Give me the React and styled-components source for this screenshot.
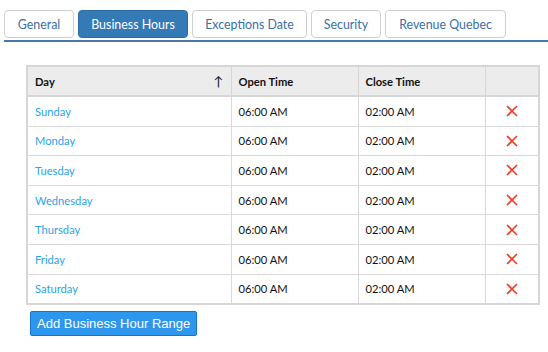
import React from 'react';
import styled, { createGlobalStyle } from 'styled-components';

const GlobalStyle = createGlobalStyle`
    body {
        margin: 0;
        background: #ffffff;
        font-family: Lato, "Noto Sans", sans-serif;
    }
`

const Page = styled.div`
    width: 548px;
    height: 352px;
    padding: 10px 0 0 4px;
    box-sizing: border-box;
`
const TabBar = styled.div`
    display: flex;
    gap: 4px;
    border-bottom: 2px solid #4a77a3;
    padding-bottom: 2px;
`
const Tab = styled.div`
    width: ${p => p.w}px;
    height: 28px;
    box-sizing: border-box;
    display: flex;
    align-items: center;
    justify-content: center;
    border: 1px solid ${p => (p.active ? '#2e6da4' : '#cfcfcf')};
    border-radius: 4px;
    background: ${p => (p.active ? '#337ab7' : '#ffffff')};
    color: ${p => (p.active ? '#ffffff' : '#3b6ea5')};
    font-size: 12.4px;
    white-space: nowrap;
`
const Content = styled.div`
    padding: 23px 10px 0 22px;
`
const Table = styled.table`
    border-collapse: collapse;
    table-layout: fixed;
    width: 512px;
    border: 2px solid #d6d6d6;
    font-size: 11.2px;
`
const HeadCell = styled.th`
    height: 28px;
    background: #ececec;
    border: 1px solid #d6d6d6;
    border-bottom: 2px solid #d6d6d6;
    text-align: left;
    padding: 0 7px;
    font-weight: 700;
    color: #111;
    position: relative;
`
const SortArrow = styled.span`
    position: absolute;
    right: 7px;
    top: 6px;
    font-size: 13px;
    font-weight: 400;
`
const Cell = styled.td`
    height: 28.6px;
    border: 1px solid #d9d9d9;
    padding: 0 7px;
    color: ${p => (p.link ? '#2aa3e8' : '#111')};
    text-align: ${p => (p.center ? 'center' : 'left')};
`
const RemoveIcon = styled.svg`
    display: block;
    margin: 0 auto;
`
const AddButton = styled.button`
    margin: 6px 0 0 4px;
    height: 25px;
    padding: 0 6px;
    background: #2f96ee;
    border: 1px solid #1b73c9;
    border-radius: 2px;
    color: #ffffff;
    font-family: "Liberation Sans", Arial, sans-serif;
    font-size: 13px;
`

const tabs = [
    { label: 'General', w: 70 },
    { label: 'Business Hours', w: 110, active: true },
    { label: 'Exceptions Date', w: 115 },
    { label: 'Security', w: 70 },
    { label: 'Revenue Quebec', w: 121 },
]

const days = ['Sunday', 'Monday', 'Tuesday', 'Wednesday', 'Thursday', 'Friday', 'Saturday']

function App() {
    return (
        <Page>
            <GlobalStyle />
            <TabBar>
                {tabs.map(t => (
                    <Tab key={t.label} active={t.active} w={t.w}>{t.label}</Tab>
                ))}
            </TabBar>
            <Content>
                <Table>
                    <colgroup>
                        <col style={{ width: 204 }} />
                        <col style={{ width: 127 }} />
                        <col style={{ width: 127 }} />
                        <col style={{ width: 54 }} />
                    </colgroup>
                    <thead>
                        <tr>
                            <HeadCell>Day<SortArrow>↑</SortArrow></HeadCell>
                            <HeadCell>Open Time</HeadCell>
                            <HeadCell>Close Time</HeadCell>
                            <HeadCell></HeadCell>
                        </tr>
                    </thead>
                    <tbody>
                        {days.map(d => (
                            <tr key={d}>
                                <Cell link>{d}</Cell>
                                <Cell>06:00 AM</Cell>
                                <Cell>02:00 AM</Cell>
                                <Cell center>
                                    <RemoveIcon width="12" height="12" viewBox="0 0 12 12">
                                        <path d="M1 1L11 11M11 1L1 11" stroke="#ee3b24" strokeWidth="1.6" />
                                    </RemoveIcon>
                                </Cell>
                            </tr>
                        ))}
                    </tbody>
                </Table>
                <AddButton>Add Business Hour Range</AddButton>
            </Content>
        </Page>
    )
}

export default App;
